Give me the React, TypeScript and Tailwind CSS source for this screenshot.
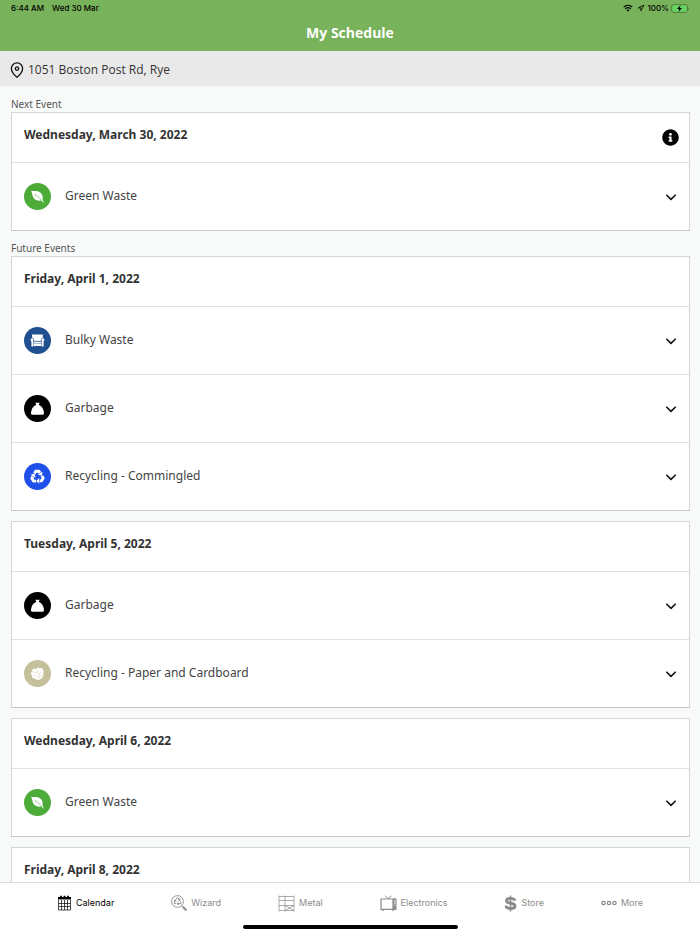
import React, { useState } from 'react';
import clsx from 'clsx';
import { FaInfoCircle, FaRecycle } from 'react-icons/fa';

type WasteType = 'green' | 'bulky' | 'garbage' | 'recycling' | 'paper';

type Pickup = { type: WasteType; label: string };

type ScheduleDay = { date: string; pickups: Pickup[] };

const GREEN: Pickup = { type: 'green', label: 'Green Waste' };
const BULKY: Pickup = { type: 'bulky', label: 'Bulky Waste' };
const GARBAGE: Pickup = { type: 'garbage', label: 'Garbage' };
const COMMINGLED: Pickup = { type: 'recycling', label: 'Recycling - Commingled' };
const PAPER: Pickup = { type: 'paper', label: 'Recycling - Paper and Cardboard' };

const nextEvent: ScheduleDay = { date: 'Wednesday, March 30, 2022', pickups: [GREEN] };

const futureEvents: ScheduleDay[] = [
  { date: 'Friday, April 1, 2022', pickups: [BULKY, GARBAGE, COMMINGLED] },
  { date: 'Tuesday, April 5, 2022', pickups: [GARBAGE, PAPER] },
  { date: 'Wednesday, April 6, 2022', pickups: [GREEN] },
  { date: 'Friday, April 8, 2022', pickups: [] },
];

const circleColors: Record<WasteType, string> = {
  green: 'bg-[#4dab3a]',
  bulky: 'bg-[#20508f]',
  garbage: 'bg-black',
  recycling: 'bg-[#1f50ea]',
  paper: 'bg-[#c5c09c]',
};

const glyphs: Record<WasteType, React.ReactNode> = {
  green: (
    <>
      <path
        fill="#fff"
        d="M7.200 8.300c3.200-.7 6.600-.6 9 1.200 2.100 1.600 2.900 4.100 2.300 7.200l1.300 2.500-.7.300-1.500-1.900c-3.300.500-6.300-.2-8-2.500C8.300 13.300 8.500 10.400 7.200 8.300z"
      />
      <path d="M10.500 11.300c2.800 1.500 4.900 3.500 6.800 6" fill="none" stroke="#4dab3a" strokeWidth=".6" />
    </>
  ),
  bulky: (
    <>
      <path fill="#fff" d="M8.800 7.500h9.400c.6 0 .9.500.8 1l-.3 2.600c-1 .1-1.500.8-1.500 1.700v1.200H9.800v-1.200c0-.9-.5-1.600-1.500-1.700L8 8.500c-.1-.5.2-1 .8-1z" />
      <path fill="#fff" d="M7.200 11.500h1.200c.6 0 1 .5 1 1.100v7H7.400v-5.400c-1-.5-1-2.200-.2-2.700zM19.800 11.500h-1.200c-.6 0-1 .5-1 1.100v7h2v-5.400c1-.5 1-2.200.2-2.700z" />
      <path fill="#fff" d="M9.400 14.500h8.200v4.500H9.400z" />
      <path stroke="#20508f" strokeWidth=".4" d="M9.800 14.300h7.400M9.800 16.500h7.400M9.600 12.500v6M17.400 12.500v6" />
    </>
  ),
  garbage: (
    <path
      fill="#fff"
      d="M11.800 7.500l1.700.5 1.700-.5.300.7-.9 1.500c2.600 1 4.200 2.900 5 6.100.4 1.500.5 2.600.2 3.300-.2.500-.6.700-1.200.7H8.400c-.7 0-1.100-.2-1.300-.7-.3-.8-.1-1.900.3-3.400.8-3.200 2.400-5 5-6l-.9-1.500z"
    />
  ),
  recycling: (
    <>
      {[0, 120, 240].map((angle) => (
        <g key={angle} transform={`rotate(${angle} 13.500 13.800)`}>
          <path fill="none" stroke="#fff" strokeWidth="2.900" strokeLinejoin="round" d="M10.500 10.400l1.300-2.200h3.200l1 1.700" />
          <path fill="#fff" d="M13.700 11.700l5-2.900-.9 4z" />
        </g>
      ))}
    </>
  ),
  paper: (
    <>
      <path fill="#fff" d="M9.800 8.500l2.200.5 2-1.500 1.700.8 2.500-.2.700 1.900 1.200 1.500-.8 2 .2 2.600-1.500 1.600-1.600 1.800-2.800.4-2.500-1.200-2.600-.7-.5-2.300-1.200-2.100.9-1.700.5-2z" />
      <path
        fill="none"
        stroke="#c5c09c"
        strokeWidth=".4"
        d="M8 11.500l4.200 1.300 2.300-3.600M12.200 12.800l3.300 1 4-2.100M15.500 13.800l-1.300 5.600M8.500 15l4.600 1.500M15 16.500l4-1.200"
      />
    </>
  ),
};

const WasteIcon = ({ type }: { type: WasteType }) => (
  <span className={clsx('size-[27px] shrink-0 rounded-full', circleColors[type])}>
    <svg viewBox="0 0 27 27" className="size-full" aria-hidden="true">
      {glyphs[type]}
    </svg>
  </span>
);

const PickupRow = ({ pickup }: { pickup: Pickup }) => {
  const [open, setOpen] = useState(false);

  return (
    <button
      type="button"
      aria-expanded={open}
      onClick={() => setOpen(!open)}
      className="flex h-[68px] w-full items-center gap-[14px] border-t border-[#e0e2e1] px-3 text-left"
    >
      <WasteIcon type={pickup.type} />
      <span className="flex-1 pb-[2px] text-[12px] leading-5 text-[#444]">{pickup.label}</span>
      <svg
        viewBox="0 0 12 12"
        className={clsx('size-3 shrink-0', open && 'rotate-180')}
        fill="none"
        stroke="#111"
        strokeWidth="1.600"
        strokeLinecap="round"
        strokeLinejoin="round"
        aria-hidden="true"
      >
        <path d="M1.800 4.200L6 8.400l4.200-4.200" />
      </svg>
    </button>
  );
};

const DayCard = ({ day, hasInfo }: { day: ScheduleDay; hasInfo?: boolean }) => (
  <article className="shrink-0 border border-[#d3d6d5] border-b-[#c4c8c6] bg-white">
    <div className="flex h-[49px] items-center justify-between pr-[10px] pl-3">
      <h3 className="pb-[6px] text-[12px] leading-5 font-bold text-[#333]">{day.date}</h3>
      {hasInfo && (
        <button type="button" aria-label="Information">
          <FaInfoCircle className="size-[17px] text-black" />
        </button>
      )}
    </div>
    {day.pickups.map((pickup) => (
      <PickupRow key={pickup.label} pickup={pickup} />
    ))}
  </article>
);

const StatusBar = () => (
  <div className="flex h-4 items-center justify-between pr-[10px] pl-[11px] font-['Inter',sans-serif] text-[8px] font-medium text-black">
    <div className="flex gap-2">
      <span>6:44 AM</span>
      <span>Wed 30 Mar</span>
    </div>
    <div className="flex items-center">
      <svg viewBox="0 0 10 8" className="mr-1 h-2 w-[10px]" fill="none" stroke="#000" strokeWidth="1.300" aria-hidden="true">
        <path d="M.7 3.100C3.200.7 6.800.7 9.300 3.100M2.300 4.900c1.600-1.500 3.800-1.500 5.400 0" />
        <path fill="#000" stroke="none" d="M3.500 6.100c.9-.8 2.100-.8 3 0L5 7.700z" />
      </svg>
      <svg viewBox="0 0 8 8" className="mr-[2px] size-2" fill="none" stroke="#000" strokeWidth=".8" strokeLinejoin="round" aria-hidden="true">
        <path d="M7 1L1.200 3.900h2.700v2.900z" />
      </svg>
      <span>100%</span>
      <svg viewBox="0 0 19 9" className="ml-[2px] h-[9px] w-[19px]" aria-hidden="true">
        <rect x=".5" y=".5" width="16" height="8" rx="2.300" fill="none" stroke="#4a7a3b" strokeWidth=".8" />
        <rect x="1.500" y="1.500" width="14" height="6" rx="1.400" fill="#62d565" />
        <path fill="#4a7a3b" d="M17.300 3.100c1 .3 1 2.500 0 2.800z" />
        <path d="M9.500 1.200L6 5h2.200l-.7 2.900L11 4H8.800z" />
      </svg>
    </div>
  </div>
);

const CalendarIcon = () => (
  <svg viewBox="0 0 15 16" className="h-4 w-[15px]" fill="none" stroke="currentColor" aria-hidden="true">
    <path fill="currentColor" stroke="none" d="M1 2h13v2.500H1z" />
    <path strokeWidth="1.800" d="M4 .7v3M7.500.7v3M11 .7v3" />
    <path strokeWidth=".7" d="M1.500 5v10h12V5M4.500 5v10M7.500 5v10M10.500 5v10M1.500 8.500h12M1.500 11.500h12" />
  </svg>
);

const WizardIcon = () => (
  <svg viewBox="0 0 16 16" className="size-4" fill="none" stroke="currentColor" aria-hidden="true">
    <circle cx="6.500" cy="6.500" r="5.900" strokeWidth=".9" />
    <FaRecycle x="2.500" y="2.300" size={8} stroke="none" />
    <path strokeWidth="2" strokeLinecap="round" d="M12.200 12.200l2.600 2.600" />
    <path strokeWidth=".9" d="M10.500 10.500l1.500 1.500" />
  </svg>
);

const MetalIcon = () => (
  <svg viewBox="0 0 17 17" className="size-[17px]" fill="none" stroke="currentColor" strokeWidth=".7" aria-hidden="true">
    <path d="M1 .500v16M7 .500v16M16 .500v16M1 1.500h15M1 5.500h15M1 10.500h15M1 15.500h15M7 10.500l9 5M16 10.500l-9 5" />
  </svg>
);

const ElectronicsIcon = () => (
  <svg viewBox="0 0 17 16" className="h-4 w-[17px]" fill="none" stroke="currentColor" aria-hidden="true">
    <path d="M5.300.800l3 3 3-3" />
    <path strokeWidth="1.200" d="M1 4h12v10.300H1z" />
    <path fill="currentColor" stroke="none" d="M13 3.400h3.500v11.500H13z" />
    <path fill="#fff" stroke="none" d="M14.100 5.200h1.400v1.200h-1.400zM14.100 7.500h1.400v1.200h-1.400zM14.100 9.800h1.400v.6h-1.400z" />
    <path d="M2 15.200h2M12 15.200h2" />
  </svg>
);

const StoreIcon = () => (
  <svg viewBox="0 0 13 17" className="h-[17px] w-[13px]" fill="none" stroke="currentColor" aria-hidden="true">
    <path strokeWidth="2.900" d="M10.800 5.800C10.500 4 9.100 3.400 6.400 3.400c-2.500 0-3.900.8-3.900 2.300 0 3.700 8.500 1.500 8.500 5.200 0 1.800-1.700 2.600-4.300 2.600-3 0-4.500-.9-4.800-2.900" />
    <path strokeWidth="1.500" d="M6.500.500v16" />
  </svg>
);

const MoreIcon = () => (
  <svg viewBox="0 0 16 6" className="h-[6px] w-4" fill="none" stroke="currentColor" strokeWidth="1.200" aria-hidden="true">
    <circle cx="2.500" cy="3" r="1.700" />
    <circle cx="8" cy="3" r="1.700" />
    <circle cx="13.500" cy="3" r="1.700" />
  </svg>
);

const tabs = [
  { label: 'Calendar', icon: <CalendarIcon /> },
  { label: 'Wizard', icon: <WizardIcon /> },
  { label: 'Metal', icon: <MetalIcon /> },
  { label: 'Electronics', icon: <ElectronicsIcon /> },
  { label: 'Store', icon: <StoreIcon /> },
  { label: 'More', icon: <MoreIcon /> },
];

const TabBar = () => {
  const [active, setActive] = useState('Calendar');

  return (
    <nav className="flex h-[52px] shrink-0 flex-col items-center justify-between border-t border-[#dcdcdc] bg-white pb-[5px] font-['Inter',sans-serif]">
      <div className="flex h-10 w-full items-center justify-evenly">
        {tabs.map(({ label, icon }) => (
          <button
            key={label}
            type="button"
            onClick={() => setActive(label)}
            className={clsx(
              'flex items-center gap-1 text-[9px] leading-4',
              active === label ? 'text-black' : 'text-[#8b8b8b]'
            )}
          >
            {icon}
            {label}
          </button>
        ))}
      </div>
      <div className="h-1 w-[215px] rounded-full bg-black" />
    </nav>
  );
};

const App = () => {
  return (
    <div className="flex h-screen flex-col bg-[#f8faf9] font-['Noto_Sans',sans-serif]">
      <header className="h-[51px] shrink-0 bg-[#78b25a]">
        <StatusBar />
        <h1 className="pt-px text-center font-['Open_Sans',sans-serif] text-[14px] leading-8 font-bold text-white">
          My Schedule
        </h1>
      </header>

      <div className="flex h-[35px] shrink-0 items-center gap-1 bg-[#e9e9e9] px-[10px] pt-[2px]">
        <svg viewBox="0 0 14 16" className="h-4 w-[14px]" fill="none" stroke="#111" strokeWidth="1.300" aria-hidden="true">
          <path d="M7 15.200C4.600 13.300 1.400 10 1.400 6.500a5.600 5.600 0 0 1 11.200 0c0 3.500-3.200 6.800-5.600 8.700z" />
          <circle cx="7" cy="6.600" r="1.700" />
        </svg>
        <span className="font-['Open_Sans',sans-serif] text-[12px] leading-5 font-medium text-[#333]">
          1051 Boston Post Rd, Rye
        </span>
      </div>

      <main className="flex min-h-0 flex-1 flex-col gap-[9px] overflow-y-auto pt-[10px] pr-[10px] pl-[11px] [scrollbar-width:none]">
        <section className="shrink-0">
          <h2 className="text-[10px] leading-4 text-[#555]">Next Event</h2>
          <DayCard day={nextEvent} hasInfo />
        </section>

        <section className="shrink-0">
          <h2 className="text-[10px] leading-4 text-[#555]">Future Events</h2>
          <div className="flex flex-col gap-[10px]">
            {futureEvents.map((day) => (
              <DayCard key={day.date} day={day} />
            ))}
          </div>
        </section>
      </main>

      <TabBar />
    </div>
  );
};

export default App;
